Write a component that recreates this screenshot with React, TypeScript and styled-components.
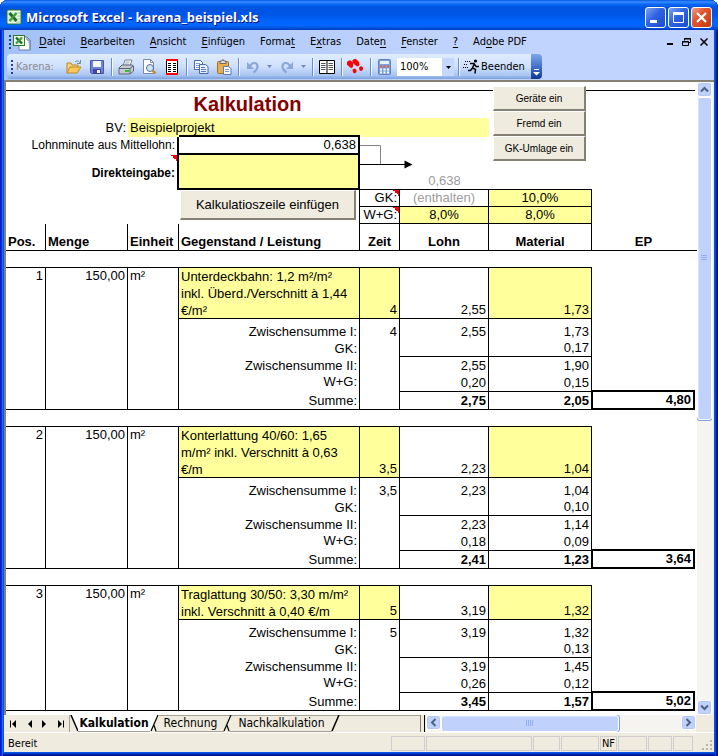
import React from "react";
import styled, { createGlobalStyle, css } from "styled-components";

const GlobalStyle = createGlobalStyle`
  * { box-sizing: border-box; }
  body { margin: 0; background: #fff; }
  button, select { font: inherit; color: inherit; margin: 0; padding: 0; border: 0; background: none; }
`;

const UI_FONT = `"DejaVu Sans Condensed", "DejaVu Sans", sans-serif`;
const SHEET_FONT = `"Liberation Sans", Arial, sans-serif`;
const YELLOW = "#ffff9c";
const BEIGE = "#efebde";

// ---------- window ----------

const Window = styled.div`
  display: flex;
  flex-direction: column;
  min-height: 100vh;
  padding: 0 4px 4px;
  border-radius: 8px 8px 0 0;
  background: #0855dd;
  box-shadow: inset 1px 0 #0019cf, inset 2px 0 #0831d9, inset 3px 0 #166aee,
    inset -1px 0 #00138c, inset -2px 0 #001ea0, inset -3px 0 #0441d8,
    inset 0 -1px #00138c, inset 0 -2px #001ea0, inset 0 -3px #0441d8;
  font: 11px ${UI_FONT};
  color: #000;
`;

const TitleBar = styled.header`
  display: flex;
  align-items: center;
  gap: 2px;
  height: 30px;
  margin: 0 -4px;
  padding: 4px 6px 0;
  border-radius: 8px 8px 0 0;
  background: linear-gradient(
    #0058e6 0,
    #3c8cff 2px,
    #0a6cf8 4px,
    #0054e0 7px,
    #0055e5 14px,
    #0066ff 22px,
    #0066ff 26px,
    #0050d8 28px,
    #003cbe 30px
  );
`;

const Title = styled.h1`
  flex: 1;
  margin: 0 0 0 2px;
  font: bold 13px "Open Sans", "Noto Sans", sans-serif;
  color: #fff;
  text-shadow: 1px 1px #0f1089;
  white-space: nowrap;
`;

const CaptionButton = styled.button<{ $close?: boolean }>`
  width: 21px;
  height: 21px;
  border: 1px solid #fff;
  border-radius: 3px;
  background: ${p =>
    p.$close
      ? "linear-gradient(135deg, #f0a08a, #e2552e 40%, #c33c12)"
      : "linear-gradient(135deg, #7ba5f5, #2f62e0 45%, #1c4fcf)"};
  svg { display: block; }
`;

const MenuBar = styled.nav`
  display: flex;
  align-items: center;
  height: 24px;
  padding: 0 2px 0 3px;
  background: linear-gradient(90deg, #a3c2f7, #bfd3fc 60%, #c0d4fd);
`;

const Grip = styled.span`
  width: 2px;
  height: 14px;
  margin: 0 2px;
  background: repeating-linear-gradient(#27418a 0 2px, transparent 2px 4px);
`;

const MenuItem = styled.button`
  padding: 0 8px 0 7px;
  line-height: 20px;
  white-space: nowrap;
  u { text-underline-offset: 2px; }
`;

const Spacer = styled.span`
  flex: 1;
`;

const MdiButton = styled.button`
  width: 17px;
  height: 16px;
  svg { display: block; margin: auto; }
`;

const ToolDock = styled.div`
  display: flex;
  height: 26px;
  padding: 0 0 1px 3px;
  background: linear-gradient(90deg, #a3c2f7, #bfd3fc 60%, #c0d4fd);
`;

const ToolBar = styled.div`
  display: flex;
  align-items: center;
  width: 524px;
  padding-left: 2px;
  border-radius: 4px 0 0 4px;
  background: linear-gradient(#dfecff, #cfe0fc 50%, #a9c5f2 85%, #7ba0dd);
`;

const ToolName = styled.span`
  width: 47px;
  padding-left: 1px;
  color: #8d8d8d;
`;

const ToolButton = styled.button`
  display: flex;
  align-items: center;
  justify-content: center;
  width: 23px;
  height: 22px;
`;

const DropArrow = styled.button`
  display: flex;
  align-items: center;
  justify-content: center;
  width: 11px;
  height: 22px;
`;

const Separator = styled.span`
  width: 6px;
  height: 18px;
  background: linear-gradient(90deg, transparent 3px, #6a8ccb 3px 4px, #f1f9ff 4px 5px, transparent 5px);
`;

const Zoom = styled.label`
  display: flex;
  position: relative;
  width: 57px;
  height: 18px;
  margin: 0 1px;
  select {
    appearance: none;
    width: 100%;
    padding-left: 3px;
    border-radius: 0;
    background: linear-gradient(90deg, #fff 45px, #c3d8fb 45px);
  }
  svg {
    position: absolute;
    right: 3px;
    top: 8px;
    pointer-events: none;
  }
`;

const ExitButton = styled.button`
  display: flex;
  align-items: center;
  gap: 1px;
  height: 22px;
  padding-left: 2px;
`;

const ToolEnd = styled.button`
  display: flex;
  align-items: flex-end;
  justify-content: center;
  width: 11px;
  padding-bottom: 3px;
  border-radius: 0 4px 4px 0;
  background: linear-gradient(#7ea6ec, #3a66bf 60%, #0d3790);
`;

// ---------- sheet ----------

const SheetArea = styled.main`
  display: flex;
  flex: 1;
  border: solid #848073;
  border-width: 2px 0 0 2px;
  background: #fff;
`;

const Table = styled.table`
  flex: 1;
  align-self: flex-start;
  width: 100%;
  min-width: 0;
  table-layout: fixed;
  border-collapse: separate;
  border-spacing: 0;
  font: 13px/16px ${SHEET_FONT};
`;

const Row = styled.tr<{ $h: number }>`
  > td, > th { height: ${p => p.$h}px; }
`;

type CellProps = {
  $r?: number;
  $b?: number;
  $l?: number;
  $fill?: boolean;
  $align?: string;
  $v?: string;
  $bold?: boolean;
  $small?: boolean;
  $grey?: boolean;
  $note?: boolean;
};

const cell = css<CellProps>`
  padding: 0 2px;
  border: 0 solid #000;
  border-right-width: ${p => p.$r || 0}px;
  border-bottom-width: ${p => p.$b || 0}px;
  border-left-width: ${p => p.$l || 0}px;
  background-color: ${p => (p.$fill ? YELLOW : "transparent")};
  text-align: ${p => p.$align || "right"};
  vertical-align: ${p => p.$v || "bottom"};
  font-weight: ${p => (p.$bold ? "bold" : "normal")};
  font-size: ${p => (p.$small ? 12 : 13)}px;
  color: ${p => (p.$grey ? "#9c9c9c" : "inherit")};
  white-space: nowrap;
  ${p =>
    p.$note &&
    css`
      background-image: linear-gradient(to top right, transparent 50%, #f00 50%);
      background-repeat: no-repeat;
      background-position: top right;
      background-size: 6px 6px;
    `}
`;

const Td = styled.td<CellProps>`
  ${cell}
`;

const Th = styled.th<CellProps>`
  ${cell}
`;

// holds drawing objects that float over the grid
const AnchorTd = styled(Td)`
  position: relative;
`;

const SheetTitle = styled.h2`
  margin: 0;
  font-size: 20px;
  line-height: 27px;
  color: #840000;
`;

const Description = styled.div`
  margin-bottom: -1px;
  line-height: 17px;
  white-space: pre-line;
`;

const ProjectName = styled.div`
  width: 0;
`;

const raised = css`
  border: solid;
  border-width: 1px 2px 2px 1px;
  border-color: #fff #848073 #848073 #fff;
  background: ${BEIGE};
`;

const InsertButton = styled.button`
  display: block;
  width: 100%;
  height: 30px;
  margin: 0 0 0 -1px;
  ${raised}
`;

const ButtonStack = styled.div`
  position: absolute;
  z-index: 1;
  top: -5px;
  left: 4px;
  display: flex;
  flex-direction: column;
  width: 93px;
`;

const SmallButton = styled.button`
  height: 25px;
  padding-top: 1px;
  font-size: 10px;
  ${raised}
`;

const Connector = styled.svg`
  position: absolute;
  left: 0;
  top: 0;
`;

// ---------- scroll bars ----------

const scrollFace = css`
  border: 1px solid #fff;
  border-radius: 3px;
  background: #c0d2fb;
  box-shadow: inset 0 0 0 1px #b3c8f5;
`;

const VScroll = styled.div`
  display: flex;
  flex-direction: column;
  width: 17px;
  padding: 0 1px 0 0;
  background: #f6f4f0;
  border-right: 1px solid ${BEIGE};
`;

const HScroll = styled.div`
  display: flex;
  width: 270px;
  background: #f6f4f0;
`;

const ScrollButton = styled.button`
  display: flex;
  flex: none;
  align-items: center;
  justify-content: center;
  width: 15px;
  height: 15px;
  ${scrollFace}
`;

const VThumb = styled.div`
  display: flex;
  align-items: center;
  justify-content: center;
  width: 15px;
  height: 51%;
  ${scrollFace}
  box-shadow: inset 1px 0 #d6e3ff, 0 1px #7ca0e0;
`;

const HThumb = styled.div`
  display: flex;
  align-items: center;
  justify-content: center;
  width: 178px;
  ${scrollFace}
  box-shadow: inset 0 1px #d6e3ff, 1px 0 #7ca0e0;
`;

// ---------- tabs and status ----------

const TabBar = styled.div`
  display: flex;
  height: 18px;
  padding-left: 1px;
  border-bottom: 1px solid #fff;
  background: ${BEIGE};
  font-size: 12px;
`;

const NavButton = styled.button`
  display: flex;
  align-items: center;
  justify-content: center;
  width: 16px;
`;

const TabEdge = styled.svg`
  flex: none;
  display: block;
`;

const Tab = styled.button<{ $active?: boolean; $w: number }>`
  width: ${p => p.$w}px;
  height: 17px;
  line-height: 15px;
  white-space: nowrap;
  font-weight: ${p => (p.$active ? "bold" : "normal")};
  background: ${p => (p.$active ? "#fff" : BEIGE)};
  border: solid #a5a194;
  border-width: ${p => (p.$active ? "0 0 1px" : "1px 0")};
`;

const TabRest = styled.div`
  flex: 1;
  border-top: 1px solid #a5a194;
`;

const Splitter = styled.div`
  width: 5px;
  margin-right: 1px;
  border: solid;
  border-width: 0 1px 0 1px;
  border-color: #fff #000 #fff #848073;
`;

const StatusBar = styled.footer`
  display: flex;
  align-items: center;
  gap: 1px;
  height: 19px;
  padding: 2px 1px 0 4px;
  background: ${BEIGE};
`;

const Pane = styled.span<{ $w: number }>`
  width: ${p => p.$w}px;
  height: 15px;
  border: 1px solid #d0cdd0;
  line-height: 14px;
  text-align: center;
`;

const StatusText = styled.span`
  flex: 1;
`;

// ---------- icons ----------

const ExcelIcon = ({ size = 16 }: { size?: number }) => (
  <svg width={size} height={size} viewBox="0 0 16 16">
    <rect x="1" y="1" width="14" height="14" rx="1" fill="#f4faef" stroke="#2d7a34" />
    <path d="M10 4h4M11 7h3M11 10h3M10 13h4" stroke="#8fbd8f" />
    <rect x="2" y="3" width="10" height="10" fill="#d9ecd0" />
    <path d="M3.500 4l7 8" stroke="#1b6e22" strokeWidth="2.800" />
    <path d="M10.500 4l-7 8" stroke="#3f9a3a" strokeWidth="2.400" />
  </svg>
);

const BookIcon = () => (
  <svg width="19" height="17" viewBox="0 0 19 17">
    <path d="M6 3h8l3 3v10H6z" fill="#fff" stroke="#6b7fa8" />
    <path d="M14 3v3h3v10" fill="#b9cdf0" stroke="#6b7fa8" />
    <rect x=".5" y="1.500" width="11" height="10" fill="#eaf5e4" stroke="#2d7a34" />
    <path d="M3 3.500l6 6" stroke="#1b6e22" strokeWidth="2.400" />
    <path d="M9 3.500l-6 6" stroke="#3f9a3a" strokeWidth="2.200" />
  </svg>
);

const OpenIcon = () => (
  <svg width="16" height="16" viewBox="0 0 16 16">
    <path d="M1 14V4h4l1 2h6v3" fill="#f7d274" stroke="#b98b28" />
    <path d="M1 14l3-6h11l-4 6z" fill="#ffc85a" stroke="#b98b28" />
    <path d="M9 3c2-2 4-1 5 1M14.500 1v3.500H11" fill="none" stroke="#6d88ad" />
  </svg>
);

const SaveIcon = () => (
  <svg width="16" height="16" viewBox="0 0 16 16">
    <path d="M1.500 1.500h13v13h-12l-1-1z" fill="#6e80dc" stroke="#4956b4" />
    <rect x="4" y="2" width="8" height="6" fill="#f4f7ff" />
    <rect x="4" y="10" width="8" height="5" fill="#3d479c" />
    <rect x="8" y="11" width="3" height="3" fill="#fff" />
  </svg>
);

const PrintIcon = () => (
  <svg width="16" height="16" viewBox="0 0 16 16">
    <path d="M5 7l2-6h7l-2 6z" fill="#fff" stroke="#7a8290" />
    <path d="M7.500 3h4M7 5h4" stroke="#8aa0c0" />
    <path d="M1 9l3-3h10l1.500 1v5L12 15H1z" fill="#c5cad3" stroke="#5e6673" />
    <path d="M1 9.500h11V15M12 9.500l3-2.500" fill="none" stroke="#5e6673" />
    <rect x="7" y="11" width="4" height="2" fill="#2fc52a" />
  </svg>
);

const PreviewIcon = () => (
  <svg width="16" height="16" viewBox="0 0 16 16">
    <path d="M2.500.5h7l3 3v11h-10z" fill="#fff" stroke="#7a8bab" />
    <path d="M9.500.5v3h3" fill="none" stroke="#7a8bab" />
    <circle cx="9" cy="9" r="3.500" fill="#cbe6fa" stroke="#56708f" />
    <path d="M11.500 11.500l3 3" stroke="#c98b42" strokeWidth="2.500" />
  </svg>
);

const ListIcon = () => (
  <svg width="12" height="16" viewBox="0 0 12 16">
    <rect x=".5" y="1" width="11" height="14" fill="#fff" stroke="#000" />
    <path d="M0 1h12M0 15h12" stroke="#f00" strokeWidth="2" />
    <path d="M2 4.500h3M7 4.500h3M2 6.500h3M7 6.500h3M2 8.500h3M7 8.500h3M2 10.500h3M7 10.500h3M2 12.500h3M7 12.500h3" stroke="#000" />
  </svg>
);

const CopyIcon = () => (
  <svg width="16" height="16" viewBox="0 0 16 16">
    <path d="M1.500 1.500h6l2 2v7h-8z" fill="#fff" stroke="#4a66ad" />
    <path d="M3 4.500h4M3 6.500h5M3 8.500h4" stroke="#7c98d8" />
    <path d="M6.500 5.500h6l2.500 2v7H6.500z" fill="#e8f0ff" stroke="#4a66ad" />
    <path d="M8 8.500h4M8 10.500h5M8 12.500h5" stroke="#5878c8" />
  </svg>
);

const PasteIcon = () => (
  <svg width="16" height="16" viewBox="0 0 16 16">
    <rect x="1.500" y="2.500" width="11" height="12" rx="1" fill="#e9ad4b" stroke="#a56f1e" />
    <path d="M4 4.500V2h2l1-1.500L8 2h2v2.500z" fill="#d9dce3" stroke="#6d6a65" />
    <path d="M7.500 7.500h5l2.500 2v6H7.500z" fill="#f4f7ff" stroke="#5b78b8" />
    <path d="M9 10.500h4M9 12.500h4" stroke="#7c98d8" />
  </svg>
);

const UndoIcon = ({ flip }: { flip?: boolean }) => (
  <svg width="14" height="14" viewBox="0 0 14 14">
    <g transform={flip ? "translate(14 0) scale(-1 1)" : undefined}>
      <path d="M4 6c2-4 7-4 7.500 0 .3 3-2 5-4 6.500" fill="none" stroke="#8ba6d8" strokeWidth="2.200" />
      <path d="M1 2v7h7z" fill="#8ba6d8" />
    </g>
  </svg>
);

const Triangle = ({ color = "#000" }: { color?: string }) => (
  <svg width="5" height="3" viewBox="0 0 5 3">
    <path d="M0 0h5L2.500 3z" fill={color} />
  </svg>
);

const PagesIcon = () => (
  <svg width="16" height="14" viewBox="0 0 16 14">
    <path d="M.5.5h15v13H.5zM8 .5v13" fill="#fff" stroke="#000" />
    <path d="M2 3.500h4.500M2 5.500h4.500M2 7.500h4.500M2 9.500h4.500M9.500 3.500H14M9.500 5.500H14M9.500 7.500H14M9.500 9.500H14" stroke="#555" />
  </svg>
);

const FeetIcon = () => (
  <svg width="17" height="15" viewBox="0 0 17 15" fill="#f00">
    <path d="M0 3l2-1.500h2L6 4v3.500L5 9 3 8.500 0 5.500z" />
    <path d="M5.500 10.500L8 9.500l1.500 1.500v2L8 14.500 6 13.500z" />
    <path d="M5.500 1.500L7 0h2l3 3 .5 3L11 7.500 8.500 6.500 5.500 3.500z" />
    <path d="M12 8.500L14 7l2 1.500v2L14.500 12l-2-.5z" />
  </svg>
);

const CalcIcon = () => (
  <svg width="13" height="16" viewBox="0 0 13 16">
    <rect x=".5" y=".5" width="12" height="15" rx="1" fill="#7f9fdc" stroke="#5f80c2" />
    <rect x="2" y="2" width="9" height="3" fill="#e9f3ff" />
    <path d="M2 7.500h9" stroke="#e25c3a" strokeWidth="2" strokeDasharray="2 1.500" />
    <path d="M2 10.500h9M2 13.500h9" stroke="#fff" strokeWidth="2" strokeDasharray="2 1.500" />
  </svg>
);

const RunIcon = () => (
  <svg width="17" height="15" viewBox="0 0 17 15">
    <circle cx="12.500" cy="2" r="1.600" />
    <path d="M7 4.500h4l2 3h3M11.500 4.500L9.500 9l3 1.500-.5 4M9.500 9L7.500 11.500H5" fill="none" stroke="#000" strokeWidth="1.500" />
    <path d="M2 2.500h5M1 5.500h4M0 8.500h5" stroke="#000" strokeDasharray="1 1" />
  </svg>
);

const Chevron = ({ turn }: { turn: number }) => (
  <svg width="9" height="9" viewBox="0 0 9 9">
    <path d="M1 6.500L4.500 3 8 6.500" fill="none" stroke="#4d6185" strokeWidth="2" transform={`rotate(${turn} 4.500 4.500)`} />
  </svg>
);

const NavIcon = ({ left, bar }: { left?: boolean; bar?: boolean }) => (
  <svg width="8" height="8" viewBox="0 0 8 8">
    <g transform={left ? "translate(8 0) scale(-1 1)" : undefined}>
      <path d="M1 0v8l4-4z" />
      {bar && <path d="M6 .5h1v7H6z" />}
    </g>
  </svg>
);

// ---------- data ----------

const menus: [string, string, string][] = [
  ["", "D", "atei"],
  ["", "B", "earbeiten"],
  ["", "A", "nsicht"],
  ["", "E", "infügen"],
  ["Forma", "t", ""],
  ["E", "x", "tras"],
  ["Date", "n", ""],
  ["", "F", "enster"],
  ["", "?", ""],
  ["Ad", "o", "be PDF"]
];

interface IPosition {
  pos: number;
  text: string;
  lines: number;
  zeit: string;
  lohn: string;
  material: string;
  gk: string;
  sub: [string, string];
  wg: [string, string];
  sum: [string, string];
  ep: string;
}

const positions: IPosition[] = [
  {
    pos: 1,
    text: "Unterdeckbahn: 1,2 m²/m²\ninkl. Überd./Verschnitt à 1,44\n€/m²",
    lines: 3,
    zeit: "4",
    lohn: "2,55",
    material: "1,73",
    gk: "0,17",
    sub: ["2,55", "1,90"],
    wg: ["0,20", "0,15"],
    sum: ["2,75", "2,05"],
    ep: "4,80"
  },
  {
    pos: 2,
    text: "Konterlattung 40/60: 1,65\nm/m² inkl. Verschnitt à 0,63\n€/m",
    lines: 3,
    zeit: "3,5",
    lohn: "2,23",
    material: "1,04",
    gk: "0,10",
    sub: ["2,23", "1,14"],
    wg: ["0,18", "0,09"],
    sum: ["2,41", "1,23"],
    ep: "3,64"
  },
  {
    pos: 3,
    text: "Traglattung 30/50: 3,30 m/m²\ninkl. Verschnitt à 0,40 €/m",
    lines: 2,
    zeit: "5",
    lohn: "3,19",
    material: "1,32",
    gk: "0,13",
    sub: ["3,19", "1,45"],
    wg: ["0,26", "0,12"],
    sum: ["3,45", "1,57"],
    ep: "5,02"
  }
];

const columns = [40, 82, 51, undefined, 40, 89, 103, 103, 2];
const panes = [34, 106, 27, 38, 17, 29, 24, 20];

// ---------- parts ----------

const Position = ({ item }: { item: IPosition }) => (
  <tbody>
    <Row $h={17}>
      <Td $b={1} colSpan={7} />
      <Td colSpan={2} />
    </Row>
    <Row $h={item.lines * 17}>
      <Td rowSpan={6} $r={1} $b={1} $v="top">{item.pos}</Td>
      <Td rowSpan={6} $r={1} $b={1} $v="top">150,00</Td>
      <Td rowSpan={6} $r={1} $b={1} $v="top" $align="left">m²</Td>
      <Td $r={1} $b={1} $fill $v="top" $align="left">
        <Description>{item.text}</Description>
      </Td>
      <Td $r={1} $b={1} $fill>{item.zeit}</Td>
      <Td $r={1} $b={1}>{item.lohn}</Td>
      <Td $r={1} $b={1} $fill>{item.material}</Td>
      <Td colSpan={2} />
    </Row>
    <Row $h={21}>
      <Td $r={1}>Zwischensumme I:</Td>
      <Td $r={1}>{item.zeit}</Td>
      <Td $r={1}>{item.lohn}</Td>
      <Td $r={1}>{item.material}</Td>
      <Td colSpan={2} />
    </Row>
    <Row $h={17}>
      <Td $r={1}>GK:</Td>
      <Td $r={1} />
      <Td $r={1} $b={1} />
      <Td $r={1} $b={1}>{item.gk}</Td>
      <Td colSpan={2} />
    </Row>
    <Row $h={17}>
      <Td $r={1}>Zwischensumme II:</Td>
      <Td $r={1} />
      <Td $r={1}>{item.sub[0]}</Td>
      <Td $r={1}>{item.sub[1]}</Td>
      <Td colSpan={2} />
    </Row>
    <Row $h={18}>
      <Td $r={1} $v="top">W+G:</Td>
      <Td $r={1} />
      <Td $r={1} $b={1}>{item.wg[0]}</Td>
      <Td $r={1} $b={1}>{item.wg[1]}</Td>
      <Td $b={2} />
      <Td />
    </Row>
    <Row $h={18}>
      <Td $r={1} $b={1}>Summe:</Td>
      <Td $r={1} $b={1} />
      <Td $r={1} $b={1} $bold>{item.sum[0]}</Td>
      <Td $r={1} $b={1} $bold>{item.sum[1]}</Td>
      <Td $l={1} $r={2} $b={2} $bold>{item.ep}</Td>
      <Td />
    </Row>
  </tbody>
);

const Sheet = () => (
  <Table>
    <colgroup>
      {columns.map((w, i) => (
        <col key={i} width={w} />
      ))}
    </colgroup>
    <tbody>
      <Row $h={9}>
        <Td $b={1} colSpan={8} />
        <Td />
      </Row>
      <Row $h={27}>
        <Td colSpan={6} $align="center" $v="middle">
          <SheetTitle>Kalkulation</SheetTitle>
        </Td>
        <AnchorTd colSpan={3}>
          <ButtonStack>
            <SmallButton>Geräte ein</SmallButton>
            <SmallButton>Fremd ein</SmallButton>
            <SmallButton>GK-Umlage ein</SmallButton>
          </ButtonStack>
        </AnchorTd>
      </Row>
      <Row $h={19}>
        <Td colSpan={2} $v="middle">BV:</Td>
        <Td $fill $align="left" $v="middle">
          <ProjectName>Beispielprojekt</ProjectName>
        </Td>
        <Td $fill $b={2} />
        <Td $fill colSpan={2} />
        <Td colSpan={3} />
      </Row>
      <Row $h={18}>
        <Td colSpan={3} $r={2} $small $v="top">Lohnminute aus Mittellohn:</Td>
        <Td $r={2} $b={2}>0,638</Td>
        <AnchorTd rowSpan={2} $b={1}>
          <Connector width="54" height="36">
            <path d="M0 8.500h20.500v19" fill="none" stroke="#848284" />
            <path d="M0 27.500h46" stroke="#000" />
            <path d="M44.500 23.500v8l8-4z" />
          </Connector>
        </AnchorTd>
        <Td colSpan={4} />
      </Row>
      <Row $h={35}>
        <Td colSpan={3} $r={2} $small $bold $note $v="middle">Direkteingabe:</Td>
        <Td $r={2} $b={2} $fill />
        <Td $b={1} $grey $align="center">0,638</Td>
        <Td $b={1} />
        <Td colSpan={2} />
      </Row>
      <Row $h={17}>
        <Td colSpan={3} />
        <Td rowSpan={2} $r={1} $v="top">
          <InsertButton>Kalkulatioszeile einfügen</InsertButton>
        </Td>
        <Td $r={1} $b={1} $note>GK:</Td>
        <Td $r={1} $b={1} $grey $align="center">(enthalten)</Td>
        <Td $r={1} $b={1} $fill $align="center">10,0%</Td>
        <Td colSpan={2} />
      </Row>
      <Row $h={17}>
        <Td colSpan={3} />
        <Td $r={1} $b={1} $note>W+G:</Td>
        <Td $r={1} $b={1} $fill $align="center">8,0%</Td>
        <Td $r={1} $b={1} $fill $align="center">8,0%</Td>
        <Td colSpan={2} />
      </Row>
      <Row $h={27}>
        <Th $r={1} $b={1} $bold $align="left">Pos.</Th>
        <Th $r={1} $b={1} $bold $align="left">Menge</Th>
        <Th $r={1} $b={1} $bold $align="left">Einheit</Th>
        <Th $r={1} $b={1} $bold $align="left">Gegenstand / Leistung</Th>
        <Th $r={1} $b={1} $bold $align="center">Zeit</Th>
        <Th $r={1} $b={1} $bold $align="center">Lohn</Th>
        <Th $r={1} $b={1} $bold $align="center">Material</Th>
        <Th $b={1} $bold $align="center">EP</Th>
        <Td $b={1} />
      </Row>
    </tbody>
    {positions.map(item => (
      <Position key={item.pos} item={item} />
    ))}
  </Table>
);

const Tools = () => (
  <ToolDock>
    <ToolBar>
      <Grip />
      <ToolName>Karena:</ToolName>
      <ToolButton aria-label="Öffnen"><OpenIcon /></ToolButton>
      <ToolButton aria-label="Speichern"><SaveIcon /></ToolButton>
      <Separator />
      <ToolButton aria-label="Drucken"><PrintIcon /></ToolButton>
      <ToolButton aria-label="Seitenansicht"><PreviewIcon /></ToolButton>
      <ToolButton aria-label="Liste"><ListIcon /></ToolButton>
      <Separator />
      <ToolButton aria-label="Kopieren"><CopyIcon /></ToolButton>
      <ToolButton aria-label="Einfügen"><PasteIcon /></ToolButton>
      <Separator />
      <ToolButton aria-label="Rückgängig"><UndoIcon /></ToolButton>
      <DropArrow aria-label="Rückgängig Liste"><Triangle color="#7187b5" /></DropArrow>
      <ToolButton aria-label="Wiederholen"><UndoIcon flip /></ToolButton>
      <DropArrow aria-label="Wiederholen Liste"><Triangle color="#7187b5" /></DropArrow>
      <Separator />
      <ToolButton aria-label="Seiten"><PagesIcon /></ToolButton>
      <Separator />
      <ToolButton aria-label="Schritte"><FeetIcon /></ToolButton>
      <Separator />
      <ToolButton aria-label="Rechner"><CalcIcon /></ToolButton>
      <Zoom>
        <select aria-label="Zoom">
          <option>100%</option>
        </select>
        <Triangle />
      </Zoom>
      <Separator />
      <ExitButton><RunIcon />Beenden</ExitButton>
    </ToolBar>
    <ToolEnd aria-label="Optionen">
      <svg width="7" height="7" viewBox="0 0 7 7">
        <path d="M1 .5h5" stroke="#fff" />
        <path d="M0 3h7L3.500 6.500z" fill="#fff" />
      </svg>
    </ToolEnd>
  </ToolDock>
);

const App: React.FC = () => (
  <>
    <GlobalStyle />
    <Window>
      <TitleBar>
        <ExcelIcon />
        <Title>Microsoft Excel - karena_beispiel.xls</Title>
        <CaptionButton aria-label="Minimieren">
          <svg width="19" height="19"><path d="M4 12h7v3H4z" fill="#fff" /></svg>
        </CaptionButton>
        <CaptionButton aria-label="Maximieren">
          <svg width="19" height="19"><path d="M4.500 5v9.500h10V5" fill="none" stroke="#fff" /><path d="M4 4h11v3H4z" fill="#fff" /></svg>
        </CaptionButton>
        <CaptionButton $close aria-label="Schließen">
          <svg width="19" height="19"><path d="M5 5l9 9M14 5l-9 9" stroke="#fff" strokeWidth="2.200" /></svg>
        </CaptionButton>
      </TitleBar>
      <MenuBar>
        <Grip />
        <BookIcon />
        {menus.map(([before, key, after]) => (
          <MenuItem key={before + key + after}>
            {before}<u>{key}</u>{after}
          </MenuItem>
        ))}
        <Spacer />
        <MdiButton aria-label="Mappe minimieren">
          <svg width="8" height="8"><path d="M1 5h6v2H1z" /></svg>
        </MdiButton>
        <MdiButton aria-label="Mappe wiederherstellen">
          <svg width="9" height="8"><path d="M2.500 2.500V.5h6v4h-2M2 1h7M.5 3.500h6v4h-6zM0 4h7" fill="none" stroke="#000" /></svg>
        </MdiButton>
        <MdiButton aria-label="Mappe schließen">
          <svg width="8" height="8"><path d="M.5.5l7 7M7.500.5l-7 7" stroke="#000" strokeWidth="1.500" /></svg>
        </MdiButton>
      </MenuBar>
      <Tools />
      <SheetArea>
        <Sheet />
        <VScroll>
          <ScrollButton aria-label="Nach oben"><Chevron turn={0} /></ScrollButton>
          <VThumb>
            <svg width="7" height="7"><path d="M0 .5h6M0 2.500h6M0 4.500h6" stroke="#8db0f2" /></svg>
          </VThumb>
          <Spacer />
          <ScrollButton aria-label="Nach unten"><Chevron turn={180} /></ScrollButton>
        </VScroll>
      </SheetArea>
      <TabBar>
        <NavButton aria-label="Erstes Blatt"><NavIcon left bar /></NavButton>
        <NavButton aria-label="Voriges Blatt"><NavIcon left /></NavButton>
        <NavButton aria-label="Nächstes Blatt"><NavIcon /></NavButton>
        <NavButton aria-label="Letztes Blatt"><NavIcon bar /></NavButton>
        <TabEdge width="9" height="17">
          <path d="M2 0h7v17z" fill="#fff" />
          <path d="M.5 0v17" stroke="#a5a194" />
          <path d="M2 0l7 16" stroke="#000" strokeWidth="1.500" />
        </TabEdge>
        <Tab $active $w={72}>Kalkulation</Tab>
        <TabEdge width="8" height="17">
          <path d="M0 0h8L1 16H0z" fill="#fff" />
          <path d="M8 .5H7M5 16.500h3" stroke="#a5a194" />
          <path d="M8 0L1 16M3.500 9L6 16" fill="none" stroke="#000" strokeWidth="1.200" />
        </TabEdge>
        <Tab $w={65}>Rechnung</Tab>
        <TabEdge width="9" height="17">
          <path d="M0 .5h9M0 16.500h1M6 16.500h3" stroke="#a5a194" />
          <path d="M8 0L1 16M3.500 9L6 16" fill="none" stroke="#000" strokeWidth="1.200" />
        </TabEdge>
        <Tab $w={99}>Nachkalkulation</Tab>
        <TabEdge width="9" height="17">
          <path d="M0 .5h9M0 16.500h1" stroke="#a5a194" />
          <path d="M8 0L1 16" stroke="#000" strokeWidth="1.500" />
        </TabEdge>
        <TabRest />
        <Splitter />
        <HScroll>
          <ScrollButton aria-label="Nach links"><Chevron turn={-90} /></ScrollButton>
          <HThumb>
            <svg width="9" height="7"><path d="M.5 0v6M2.500 0v6M4.500 0v6M6.500 0v6" stroke="#8db0f2" /></svg>
          </HThumb>
          <Spacer />
          <ScrollButton aria-label="Nach rechts"><Chevron turn={90} /></ScrollButton>
        </HScroll>
        <svg width="18" height="17" />
      </TabBar>
      <StatusBar>
        <StatusText>Bereit</StatusText>
        {panes.map((w, i) => (
          <Pane key={i} $w={w}>{i === 4 && "NF"}</Pane>
        ))}
        <svg width="19" height="15">
          <path d="M16 4h2v2h-2zM12 8h2v2h-2zM16 8h2v2h-2zM8 12h2v2H8zM12 12h2v2h-2zM16 12h2v2h-2z" fill="#bab6a8" />
        </svg>
      </StatusBar>
    </Window>
  </>
);

export default App;
